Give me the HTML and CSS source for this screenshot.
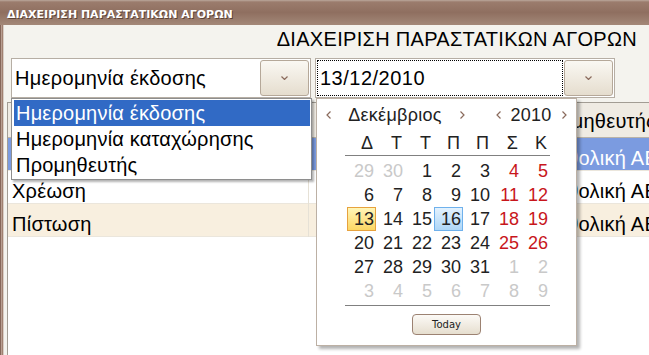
FILE: index.html
```html
<!DOCTYPE html>
<html lang="el">
<head>
    <meta charset="UTF-8">
    <title>ΔΙΑΧΕΙΡΙΣΗ ΠΑΡΑΣΤΑΤΙΚΩΝ ΑΓΟΡΩΝ</title>
    <link rel="stylesheet" href="styles.css">
</head>
<body>
    <div class="window">
        <div class="titlebar">ΔΙΑΧΕΙΡΙΣΗ ΠΑΡΑΣΤΑΤΙΚΩΝ ΑΓΟΡΩΝ</div>
        <div class="frame">
            <div class="client">
                <h1 class="heading">ΔΙΑΧΕΙΡΙΣΗ ΠΑΡΑΣΤΑΤΙΚΩΝ ΑΓΟΡΩΝ</h1>

                <div class="filters">
                    <div class="combo">
                        <span class="combo-text">Ημερομηνία έκδοσης</span>
                        <span class="drop-btn">
                            <svg width="7" height="4" viewBox="0 0 7 4"><polyline points="0.5,0.5 3.5,3.5 6.5,0.5" /></svg>
                        </span>
                    </div>
                    <div class="combo">
                        <span class="date-text">13/12/2010</span>
                        <span class="drop-btn">
                            <svg width="7" height="4" viewBox="0 0 7 4"><polyline points="0.5,0.5 3.5,3.5 6.5,0.5" /></svg>
                        </span>
                    </div>
                </div>

                <!-- πίνακας παραστατικών -->
                <div class="grid">
                    <div class="grid-row grid-head">
                        <span>Τύπος</span>
                        <span>Ημερομηνία</span>
                        <span>Προμηθευτής</span>
                    </div>
                    <div class="grid-row selected">
                        <span>Τιμολόγιο</span>
                        <span>13/12/2010</span>
                        <span>Καθολική ΑΕ</span>
                    </div>
                    <div class="grid-row">
                        <span>Χρέωση</span>
                        <span>13/12/2010</span>
                        <span>Καθολική ΑΕ</span>
                    </div>
                    <div class="grid-row alt">
                        <span>Πίστωση</span>
                        <span>13/12/2010</span>
                        <span>Καθολική ΑΕ</span>
                    </div>
                </div>
            </div>
        </div>

        <!-- ανοιχτή λίστα επιλογής -->
        <ul class="list-popup">
            <li class="active">Ημερομηνία έκδοσης</li>
            <li>Ημερομηνία καταχώρησης</li>
            <li>Προμηθευτής</li>
        </ul>

        <!-- ημερολόγιο -->
        <div class="calendar">
            <div class="cal-head">
                <span class="nav"><svg width="5" height="8" viewBox="0 0 5 8"><polyline points="4.5,0.5 1,4 4.5,7.5" /></svg></span>
                <span class="cal-month">Δεκέμβριος</span>
                <span class="nav"><svg width="5" height="8" viewBox="0 0 5 8"><polyline points="0.5,0.5 4,4 0.5,7.5" /></svg></span>
                <span class="nav year-prev"><svg width="5" height="8" viewBox="0 0 5 8"><polyline points="4.5,0.5 1,4 4.5,7.5" /></svg></span>
                <span class="cal-year">2010</span>
                <span class="nav"><svg width="5" height="8" viewBox="0 0 5 8"><polyline points="0.5,0.5 4,4 0.5,7.5" /></svg></span>
            </div>
            <div class="cal-body">
                <div class="cal-names">
                    <span>Δ</span><span>Τ</span><span>Τ</span><span>Π</span><span>Π</span><span>Σ</span><span>Κ</span>
                </div>
                <div class="cal-days">
                    <span class="other">29</span><span class="other">30</span><span>1</span><span>2</span><span>3</span><span class="wknd">4</span><span class="wknd">5</span>
                    <span>6</span><span>7</span><span>8</span><span>9</span><span>10</span><span class="wknd">11</span><span class="wknd">12</span>
                    <span class="today">13</span><span>14</span><span>15</span><span class="picked">16</span><span>17</span><span class="wknd">18</span><span class="wknd">19</span>
                    <span>20</span><span>21</span><span>22</span><span>23</span><span>24</span><span class="wknd">25</span><span class="wknd">26</span>
                    <span>27</span><span>28</span><span>29</span><span>30</span><span>31</span><span class="other">1</span><span class="other">2</span>
                    <span class="other">3</span><span class="other">4</span><span class="other">5</span><span class="other">6</span><span class="other">7</span><span class="other">8</span><span class="other">9</span>
                </div>
            </div>
            <div class="cal-foot">
                <button class="today-btn">Today</button>
            </div>
        </div>
    </div>
</body>
</html>
```

FILE: styles.css
```css
*{
    margin: 0;
    padding: 0;
    box-sizing: border-box;
}
body{
    width: 649px;
    height: 355px;
    overflow: hidden;
    font-family: "Liberation Sans", Arial, sans-serif;
    color: #000;
}
.window{
    position: relative;
    width: 649px;
    height: 355px;
    display: flex;
    flex-direction: column;
}
.titlebar{
    height: 25px;
    padding: 4px 0 0 7px;
    line-height: 21px;
    font-family: "DejaVu Sans", sans-serif;
    font-size: 11px;
    font-weight: bold;
    color: #fff;
    text-shadow: 1px 1px 0 #5c4236;
    background: linear-gradient(#bba89c 0, #9b7c6d 2px, #8f6f60 50%, #a38878 100%);
}
.frame{
    flex: 1;
    display: flex;
    padding-left: 5px;
    /* πλαίσιο παραθύρου αριστερά */
    background: linear-gradient(to right, #86675a 0 1px, #b99f92 1px 2px, #a08070 2px 3px, #d8cec6 3px 4px, #f4f3ee 4px 5px);
}
.client{
    flex: 1;
    display: flex;
    flex-direction: column;
    background: #f4f3ee;
    min-width: 0;
}
.heading{
    height: 33px;
    padding: 4px 12px 0 0;
    text-align: right;
    font-size: 20px;
    font-weight: normal;
    letter-spacing: 0.3px;
    line-height: 20px;
}
.filters{
    display: flex;
    gap: 4px;
    margin-left: 6px;
}
.combo{
    width: 300px;
    height: 40px;
    border: 1px solid #b6aea4;
    background: #fff;
    display: flex;
    align-items: center;
}
.combo-text{
    flex: 1;
    padding-left: 3px;
    font-size: 20px;
    letter-spacing: 0.3px;
    line-height: 38px;
}
.date-text{
    flex: 1;
    align-self: stretch;
    margin: 1px;
    border: 1px dotted #000;
    padding-left: 2px;
    font-size: 20px;
    letter-spacing: 0.5px;
    line-height: 34px;
}
.drop-btn{
    width: 49px;
    height: 36px;
    margin-right: 1px;
    border: 1px solid #b5a899;
    border-radius: 3px;
    background: linear-gradient(#faf8f3, #e5ddce);
    display: flex;
    align-items: center;
    justify-content: center;
}
.drop-btn polyline,
.nav polyline{
    fill: none;
    stroke: #8a6a5c;
    stroke-width: 1.2;
}
.grid{
    flex: 1;
    margin: 4px 0 0 2px;
    border-top: 1px solid #a29d94;
    border-left: 1px solid #a29d94;
    background: #fff;
    overflow: hidden;
    font-size: 20px;
    letter-spacing: 0.25px;
}
.grid-row{
    display: grid;
    grid-template-columns: 301px 218px 200px;
    height: 33px;
    border-bottom: 1px solid #ebe6dc;
}
.grid-row span{
    padding: 7px 0 0 4px;
    line-height: 26px;
    white-space: nowrap;
    border-right: 1px solid #e6e1d6;
}
.grid-row span:nth-child(2){
    padding-left: 12px;
}
.grid-row span:nth-child(3){
    padding-left: 15px;
}
.grid-head{
    height: 35px;
    background: #efebe3;
    border-bottom: 1px solid #b8b2a8;
}
.grid-head span{
    padding-top: 5px;
    border-right-color: #cfc9bd;
}
.grid-head span:nth-child(3){
    padding-left: 7px;
}
.selected{
    background: #7b9be0;
    color: #fff;
}
.alt{
    background: #f8efdf;
}
.list-popup{
    position: absolute;
    left: 11px;
    top: 98px;
    width: 301px;
    padding: 1px 1px 1px 2px;
    list-style: none;
    background: #fff;
    border: 1px solid #8e8e8e;
    box-shadow: 2px 2px 2px rgba(0, 0, 0, 0.3);
    font-size: 20px;
    letter-spacing: 0.2px;
}
.list-popup li{
    height: 26px;
    line-height: 26px;
    padding-left: 2px;
}
.list-popup li.active{
    background: #316ac5;
    color: #fff;
}
.calendar{
    position: absolute;
    left: 316px;
    top: 98px;
    width: 261px;
    height: 248px;
    background: #fff;
    border: 1px solid #bcb0a4;
    box-shadow: 3px 3px 3px rgba(0, 0, 0, 0.3);
    color: #222;
}
.cal-head{
    display: flex;
    height: 28px;
    padding: 4px 0 0 5px;
    font-size: 18px;
    letter-spacing: 0.3px;
    line-height: 24px;
}
.nav{
    width: 12px;
    display: flex;
    align-items: center;
    justify-content: center;
}
.year-prev{
    margin-left: 24px;
}
.cal-month{
    width: 122px;
    text-align: center;
}
.cal-year{
    width: 54px;
    text-align: center;
}
.cal-body{
    width: 205px;
    margin-left: 28px;
    font-size: 18px;
}
.cal-names,
.cal-days{
    display: grid;
    grid-template-columns: repeat(7, 29px);
    padding-left: 2px;
}
.cal-names{
    margin-top: 5px;
    height: 24px;
    line-height: 23px;
    border-bottom: 1px solid #808080;
}
.cal-names span{
    text-align: right;
    padding-right: 3px;
}
.cal-days{
    grid-auto-rows: 24px;
    padding-top: 3px;
    padding-bottom: 2px;
    border-bottom: 1px solid #808080;
}
.cal-days span{
    border: 1px solid transparent;
    line-height: 22px;
    text-align: right;
    padding-right: 1px;
}
.cal-days .other{
    color: #c9c9c9;
}
.cal-days .wknd{
    color: #c8161c;
}
.cal-days .today{
    border-color: #e7a23e;
    background: linear-gradient(#fff6b8, #fcd664);
}
.cal-days .picked{
    border-color: #6fb1ec;
    background: linear-gradient(#e3f2fe, #aed6f7);
}
.cal-foot{
    padding-top: 8px;
    text-align: center;
}
.today-btn{
    width: 69px;
    height: 21px;
    border: 1px solid #9c8272;
    border-radius: 4px;
    background: linear-gradient(#fcfaf6, #e6decf);
    font-family: "DejaVu Sans", sans-serif;
    font-size: 10px;
    color: #222;
}
```
